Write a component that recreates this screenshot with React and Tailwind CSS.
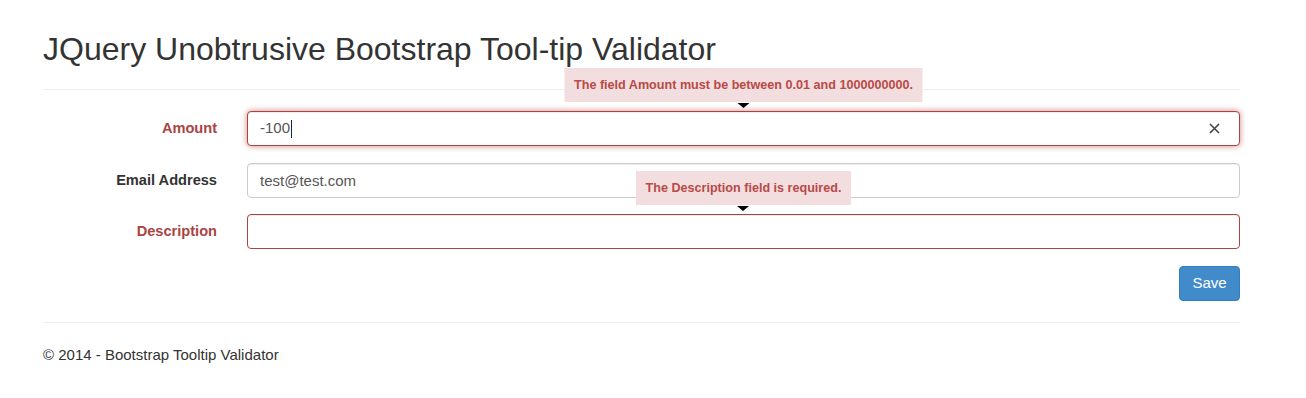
const fieldBase =
  "h-[35px] w-full rounded-[4px] border bg-white px-[12px] text-[15px] text-[#555]";

function Tip({ text }) {
  return (
    <div className="absolute left-1/2 bottom-[calc(100%+3px)] -translate-x-1/2 flex flex-col items-center">
      <div className="bg-[#f2dede] px-[10px] h-[34px] flex items-center whitespace-nowrap text-[12.6px] font-bold text-[#b94a48]">
        {text}
      </div>
      <div className="mt-[1px] w-0 h-0 border-l-[6px] border-r-[6px] border-t-[5px] border-l-transparent border-r-transparent border-t-black" />
    </div>
  );
}

function Row({ label, error, children, className = "" }) {
  return (
    <div className={`flex items-center ${className}`}>
      <label
        className={`w-[174px] text-right text-[14.6px] font-bold ${
          error ? "text-[#a94442]" : "text-[#333]"
        }`}
      >
        {label}
      </label>
      <div className="relative ml-[30px] flex-1">{children}</div>
    </div>
  );
}

export default function App() {
  return (
    <div
      className="min-h-[398px] bg-white text-[#333]"
      style={{ fontFamily: '"Liberation Sans", Arial, sans-serif' }}
    >
      <div className="ml-[43px] w-[1197px] pt-[32px]">
        <h2 className="text-[32px] leading-[35px] font-normal">
          JQuery Unobtrusive Bootstrap Tool-tip Validator
        </h2>
        <div className="mt-[22px] border-b border-[#eee]" />

        <form className="mt-[21px]" onSubmit={(e) => e.preventDefault()}>
          <Row label="Amount" error>
            <Tip text="The field Amount must be between 0.01 and 1000000000." />
            <div
              className={`${fieldBase} border-[#a94442] shadow-[inset_0_1px_1px_rgba(0,0,0,0.075),0_0_6px_#ce8483] flex items-center justify-between`}
            >
              <span className="flex items-center">
                -100
                <span className="ml-[1px] inline-block w-px h-[18px] bg-[#222]" />
              </span>
              <svg width="11" height="11" viewBox="0 0 11 11" className="mr-[7px]">
                <path d="M1 1L10 10M10 1L1 10" stroke="#444" strokeWidth="1.6" />
              </svg>
            </div>
          </Row>

          <Row label="Email Address" className="mt-[17px]">
            <input
              readOnly
              value="test@test.com"
              className={`${fieldBase} border-[#ccc] shadow-[inset_0_1px_1px_rgba(0,0,0,0.075)] outline-none`}
            />
          </Row>

          <Row label="Description" error className="mt-[16px]">
            <Tip text="The Description field is required." />
            <input
              readOnly
              value=""
              className={`${fieldBase} border-[#a94442] shadow-[inset_0_1px_1px_rgba(0,0,0,0.075)] outline-none`}
            />
          </Row>

          <div className="mt-[17px] flex justify-end">
            <button
              type="submit"
              className="h-[35px] w-[61px] rounded-[4px] border border-[#357ebd] bg-[#428bca] text-[15px] text-white"
            >
              Save
            </button>
          </div>
        </form>

        <div className="mt-[21px] border-b border-[#eee]" />
        <footer className="mt-[22px] text-[15px] leading-[20px]">
          © 2014 - Bootstrap Tooltip Validator
        </footer>
      </div>
    </div>
  );
}
